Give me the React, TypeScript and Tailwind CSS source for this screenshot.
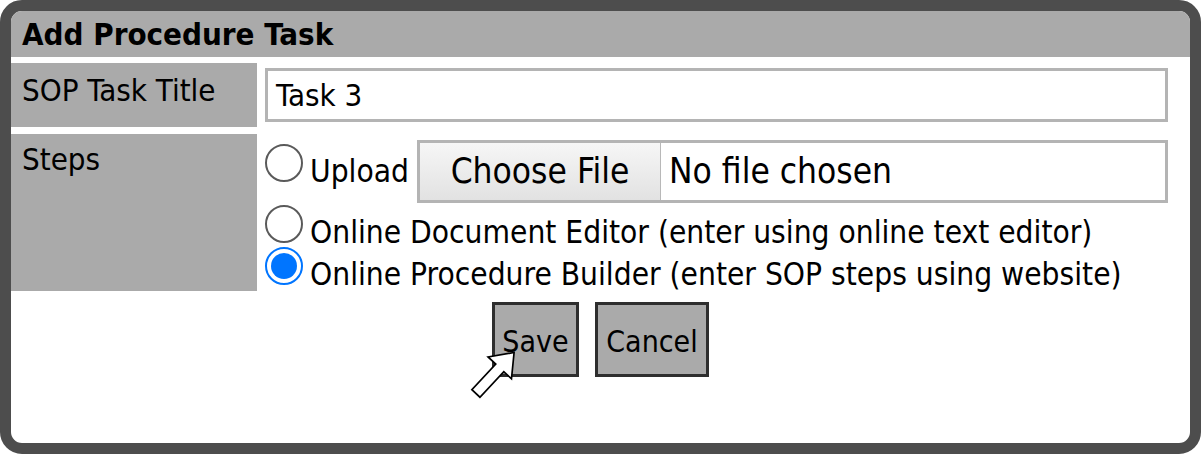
const FONT = "font-['DejaVu_Sans_Condensed','DejaVu_Sans',sans-serif]";

function Radio({ checked }: { checked?: boolean }) {
  if (checked) {
    return (
      <span className="flex h-[38px] w-[38px] shrink-0 items-center justify-center rounded-full border-[2px] border-[#0075ff] bg-white">
        <span className="h-[26px] w-[26px] rounded-full bg-[#0075ff]" />
      </span>
    );
  }
  return <span className="h-[38px] w-[38px] shrink-0 rounded-full border-[2px] border-[#5a5a5a] bg-white" />;
}

function Option({ label, checked, className }: { label: string; checked?: boolean; className?: string }) {
  return (
    <div className={`flex h-[38px] items-start gap-[7px] ${className ?? ""}`}>
      <Radio checked={checked} />
      <span className="mt-[9px] whitespace-nowrap text-[31.4px] leading-[36px]">{label}</span>
    </div>
  );
}

function Cursor() {
  // arrow pointer, drawn upright then tilted toward the Save button
  return (
    <svg className="absolute left-[460px] top-[338px]" width="70" height="70" viewBox="0 0 70 70">
      <g transform="translate(35 35) rotate(43) translate(0 -28)">
        <polygon
          points="0,0 16,21 5.5,21 5.5,56 -5.5,56 -5.5,21 -16,21"
          fill="white"
          stroke="black"
          strokeWidth="1.7"
        />
      </g>
    </svg>
  );
}

export default function App() {
  return (
    <div className={`relative h-[454px] w-[1201px] bg-white ${FONT} text-black`}>
      <div className="flex h-full w-full flex-col rounded-[22px] border-[11px] border-[#4d4d4d] bg-white">
        {/* title bar */}
        <div className="flex h-[46px] items-center rounded-t-[11px] bg-[#aaaaaa] pl-[11px] text-[31px] font-bold leading-none">
          Add Procedure Task
        </div>

        <div className="mt-[6px] flex h-[64px]">
          <div className="w-[246px] shrink-0 bg-[#aaaaaa] pl-[11px] pt-[9px] text-[31px] leading-[36px]">
            SOP Task Title
          </div>
          <div className="ml-[8px] mr-[22px] mt-[5px] h-[54px] flex-1 border-[3px] border-[#b4b4b4] pl-[8px] text-[31px] leading-[48px]">
            Task 3
          </div>
        </div>

        <div className="mt-[7px] flex h-[157px]">
          <div className="w-[246px] shrink-0 bg-[#aaaaaa] pl-[11px] pt-[7px] text-[31px] leading-[36px]">
            Steps
          </div>
          <div className="ml-[8px] mr-[22px] flex flex-1 flex-col">
            <div className="mt-[6px] flex h-[63px] items-start">
              <Option label="Upload" className="mt-[4px]" />
              <div className="ml-[8px] flex h-[63px] flex-1 border-[3px] border-[#b4b4b4]">
                <div className="flex w-[241px] items-center justify-center border-r border-[#b8b8b8] bg-gradient-to-b from-[#f6f6f6] to-[#e2e2e2] text-[35px]">
                  Choose File
                </div>
                <div className="flex items-center pl-[8px] text-[35px]">No file chosen</div>
              </div>
            </div>
            <Option label="Online Document Editor (enter using online text editor)" className="mt-[2px]" />
            <Option label="Online Procedure Builder (enter SOP steps using website)" checked className="mt-[4px]" />
          </div>
        </div>

        <div className="mt-[11px] flex justify-center gap-[16px]">
          <button className="flex h-[75px] w-[87px] items-center justify-center border-[3px] border-[#2e2e2e] bg-[#aaaaaa] pt-[4px] text-[30px]">
            Save
          </button>
          <button className="flex h-[75px] w-[114px] items-center justify-center border-[3px] border-[#2e2e2e] bg-[#aaaaaa] pt-[4px] text-[30px]">
            Cancel
          </button>
        </div>
      </div>
      <Cursor />
    </div>
  );
}
